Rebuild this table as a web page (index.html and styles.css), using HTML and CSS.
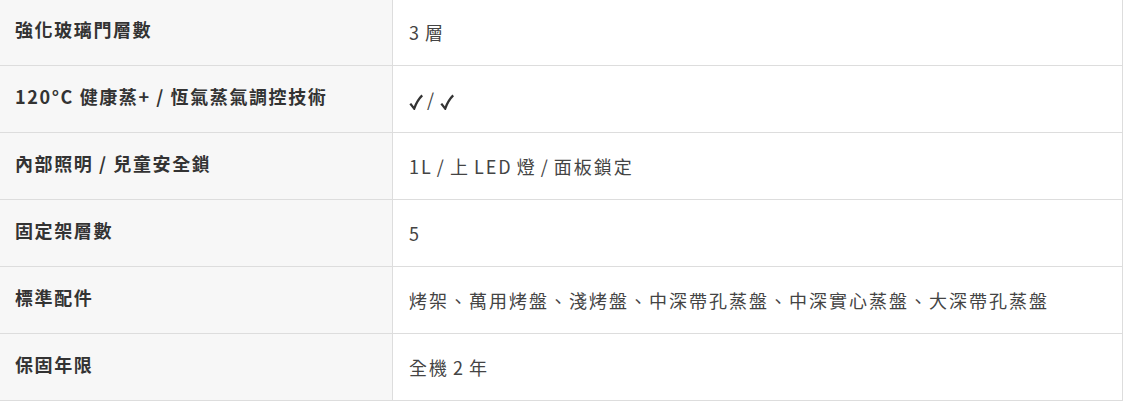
FILE: index.html
```html
<!DOCTYPE html>
<html lang="zh-Hant">
<head>
<meta charset="utf-8">
<link rel="stylesheet" href="styles.css">
</head>
<body>
<div class="spec">
  <div class="row">
    <div class="label">強化玻璃門層數</div>
    <div class="value">3 層</div>
  </div>
  <div class="row">
    <div class="label">120°C 健康蒸+ / 恆氣蒸氣調控技術</div>
    <div class="value"><svg class="check" viewBox="0 0 14 16" aria-label="✓"><path d="M1.3 9.6 L5.2 14.6 C7 9.5 9.5 5 13.2 1.4"/></svg> / <svg class="check" viewBox="0 0 14 16" aria-label="✓"><path d="M1.3 9.6 L5.2 14.6 C7 9.5 9.5 5 13.2 1.4"/></svg></div>
  </div>
  <div class="row">
    <div class="label">內部照明 / 兒童安全鎖</div>
    <div class="value">1L / 上 LED 燈 / 面板鎖定</div>
  </div>
  <div class="row">
    <div class="label">固定架層數</div>
    <div class="value">5</div>
  </div>
  <div class="row">
    <div class="label">標準配件</div>
    <div class="value">烤架、萬用烤盤、淺烤盤、中深帶孔蒸盤、中深實心蒸盤、大深帶孔蒸盤</div>
  </div>
  <div class="row">
    <div class="label">保固年限</div>
    <div class="value">全機 2 年</div>
  </div>
</div>
</body>
</html>
```
FILE: styles.css
```css
html, body {
  margin: 0;
  padding: 0;
  background: #fff;
}
body {
  font-family: "Noto Sans CJK TC", "Noto Sans", sans-serif;
  font-size: 18px;
  line-height: 27px;
  color: #333;
}
.spec {
  width: 1123px;
  margin-top: -1px;
  border-right: 1px solid #dddddd;
  box-sizing: border-box;
}
.row {
  display: grid;
  grid-template-columns: 393px 1fr;
  border-bottom: 1px solid #dddddd;
}
.label {
  background: #f7f7f7;
  border-right: 1px solid #dddddd;
  padding: 17px 15px 22px 15px;
  font-weight: 700;
  letter-spacing: 1.6px;
  color: #333;
}
.value {
  height: 27px;
  padding: 20px 16px 19px 16px;
  letter-spacing: 2px;
  word-spacing: -2px;
  color: #444;
}
.check {
  width: 14px;
  height: 16px;
  vertical-align: -3px;
  fill: none;
  stroke: #333;
  stroke-width: 2.3;
  stroke-linecap: butt;
  stroke-linejoin: miter;
}
```
